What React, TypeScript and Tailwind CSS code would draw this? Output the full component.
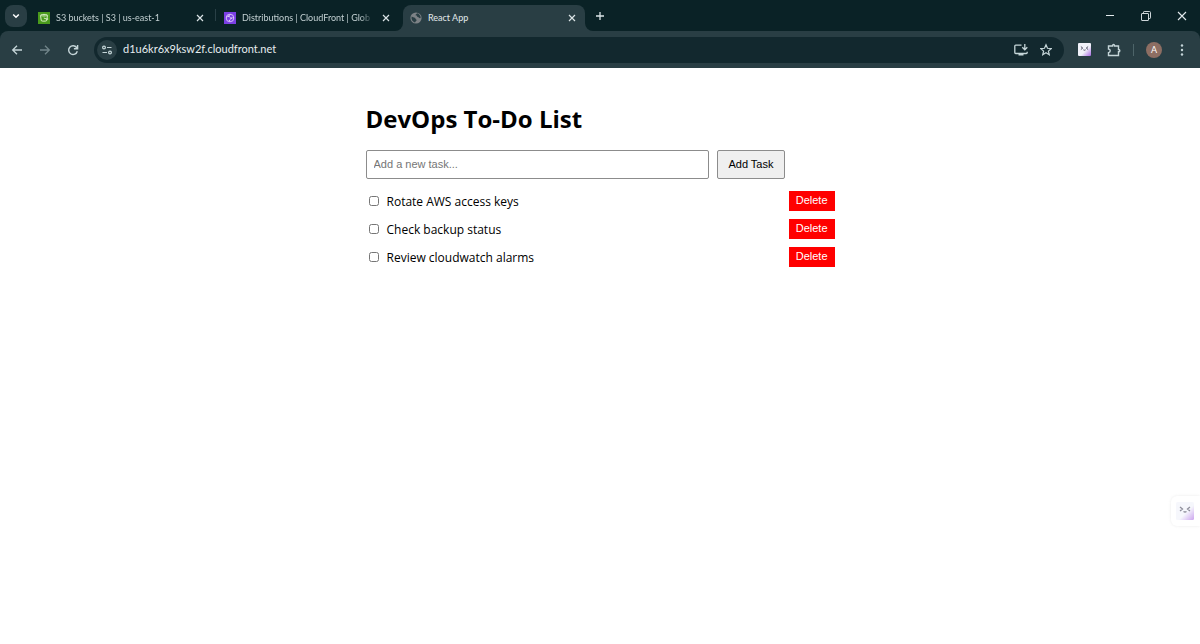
import React, { useState } from 'react';

interface Task {
  id: number;
  text: string;
  completed: boolean;
}

interface IconProps {
  className?: string;
}

const initialTasks: Task[] = [
  { id: 1, text: 'Rotate AWS access keys', completed: false },
  { id: 2, text: 'Check backup status', completed: false },
  { id: 3, text: 'Review cloudwatch alarms', completed: false }
];

const CloseIcon: React.FC<IconProps> = ({ className }) => (
  <svg className={className} viewBox="0 0 10 10" fill="none" stroke="currentColor" strokeWidth="1.2">
    <path d="M2 2l6 6M8 2L2 8" />
  </svg>
);

const BucketIcon: React.FC = () => (
  <svg className="h-3 w-3 shrink-0" viewBox="0 0 12 12" fill="none">
    <rect width="12" height="12" fill="#4a9a1c" />
    <path d="M2.5 3.5l.8 5.2c.1.6 5.2.6 5.3 0l.9-5.2M2.5 3.2c0-1 7-1 7 0s-7 1-7 0zM5.800 6l3.400 1.300c1 .3.800-.5.200-1" stroke="#e6f5d8" strokeWidth=".9" />
  </svg>
);

const CloudFrontIcon: React.FC = () => (
  <svg className="h-3 w-3 shrink-0" viewBox="0 0 12 12" fill="none">
    <rect width="12" height="12" fill="#7b3fe4" />
    <circle cx="6" cy="6" r="3.8" stroke="#e9defc" strokeWidth=".8" />
    <path d="M2.3 5l2.5-.8L7 6.2 5.6 8.8M7 6.2l2.8-.7M4.8 4.2L6.6 2.2" stroke="#e9defc" strokeWidth=".6" />
    <circle cx="4.8" cy="4.3" r=".7" fill="#e9defc" />
    <circle cx="7.2" cy="6.3" r=".7" fill="#e9defc" />
    <circle cx="5.4" cy="8.3" r=".6" fill="#e9defc" />
  </svg>
);

const GlobeIcon: React.FC = () => (
  <svg className="h-3 w-3 shrink-0" viewBox="0 0 12 12">
    <circle cx="6" cy="6" r="5.6" fill="#7d8286" />
    <path d="M1.6 4.6c1.2.5 2.2 1 3.2 1.2.8.2.4 1.4 1.3 1.6 1 .3.4 1.3-.1 1.7-.6.5-.5 1.3-1.2 1.4C2.4 9.7 1 7.6 1.6 4.6zM7 1.3c-.2.9-1.5.9-1.4 1.8.1.8 1.3.4 1.4 1.2.2.9 1.2.6 1.8 1.3.6.7 1.2.6 1.9.5C10.7 3.7 9.2 1.7 7 1.3z" fill="#293e44" />
  </svg>
);

const GhostFace: React.FC<IconProps> = ({ className }) => (
  <svg className={className} viewBox="0 0 18 18" fill="none">
    <defs>
      <linearGradient id="face" x1="4" y1="4" x2="18" y2="18" gradientUnits="userSpaceOnUse">
        <stop offset=".45" stopColor="#f1f2fa" />
        <stop offset="1" stopColor="#a968e4" />
      </linearGradient>
    </defs>
    <rect width="18" height="18" rx="1.5" fill="url(#face)" />
    <path d="M4 5l2.5 2L4 9M14 5l-2.5 2L14 9M7.5 9.5q1.5 1 3 0" stroke="#44445a" strokeWidth="1.3" />
  </svg>
);

interface TabProps {
  title: string;
  icon: React.ReactNode;
  active?: boolean;
}

const Tab: React.FC<TabProps> = ({ title, icon, active = false }) => (
  <div
    className={
      active
        ? 'relative flex w-[182px] min-w-0 items-center rounded-t-lg bg-[#293e44] pr-2 pl-[7px]'
        : 'relative flex w-[185px] min-w-0 items-center pr-2.5 pl-2'
    }
  >
    {active && (
      <>
        <span className="absolute bottom-0 -left-2 h-2 w-2 rounded-br-lg shadow-[4px_4px_0_4px_#293e44]" />
        <span className="absolute -right-2 bottom-0 h-2 w-2 rounded-bl-lg shadow-[-4px_4px_0_4px_#293e44]" />
      </>
    )}
    <button className="relative flex min-w-0 flex-1 items-center gap-1.5 text-left">
      {icon}
      <span className={active ? 'flex-1 overflow-hidden whitespace-nowrap text-[#e3eaec]' : 'flex-1 overflow-hidden mask-r-from-90% whitespace-nowrap text-[#c3d0d2]'}>
        {title}
      </span>
    </button>
    <button aria-label={`Close ${title}`} className="relative ml-2 shrink-0 text-[#dbe4e6]">
      <CloseIcon className="h-2.5 w-2.5" />
    </button>
  </div>
);

const TabStrip: React.FC = () => (
  <div className="flex h-[31px] pt-[5px] pl-[5px] text-[9px]">
    <button aria-label="Search tabs" className="mr-[3px] flex h-[22px] w-[22px] shrink-0 items-center justify-center rounded-lg bg-[#293e44] text-white">
      <svg className="h-2.5 w-2.5" viewBox="0 0 10 10" fill="none" stroke="currentColor" strokeWidth="1.5">
        <path d="M2.2 3.5L5 6.3l2.8-2.8" />
      </svg>
    </button>
    <Tab title="S3 buckets | S3 | us-east-1" icon={<BucketIcon />} />
    <span className="mt-1 h-3 w-px shrink-0 bg-[#294046]" />
    <Tab title="Distributions | CloudFront | Glob" icon={<CloudFrontIcon />} />
    <span className="w-[2px] shrink-0" />
    <Tab title="React App" icon={<GlobeIcon />} active />
    <button aria-label="New tab" className="mb-1 ml-[9px] shrink-0 text-[#dbe4e6]">
      <svg className="h-3 w-3" viewBox="0 0 12 12" fill="none" stroke="currentColor" strokeWidth="1.3">
        <path d="M6 2v8M2 6h8" />
      </svg>
    </button>
    <div className="mb-1 ml-auto flex items-center gap-6 pr-3 text-[#e3eaec]">
      <button aria-label="Minimize">
        <svg className="h-3 w-3" viewBox="0 0 12 12" stroke="currentColor"><path d="M2 5.5h8" /></svg>
      </button>
      <button aria-label="Restore">
        <svg className="h-3 w-3" viewBox="0 0 12 12" fill="none" stroke="currentColor" strokeWidth=".9">
          <rect x="1.5" y="3.5" width="7" height="7" rx=".5" />
          <path d="M3.5 3.5V2.2c0-.4.3-.7.7-.7h5.300c.6 0 1 .4 1 1v5.300c0 .4-.3.7-.7.7H8.500" />
        </svg>
      </button>
      <button aria-label="Close window">
        <svg className="h-3 w-3" viewBox="0 0 12 12" stroke="currentColor" strokeWidth="1.1"><path d="M2 2l8 8M10 2l-8 8" /></svg>
      </button>
    </div>
  </div>
);

const Toolbar: React.FC = () => (
  <div className="relative flex h-[37px] items-center rounded-t-lg bg-[#293e44] pl-2.5 text-[#c5d5d8]">
    <button aria-label="Back">
      <svg className="h-3.5 w-3.5" viewBox="0 0 14 14" fill="none" stroke="currentColor" strokeWidth="1.3"><path d="M12 7H2.7M7 2.7L2.7 7 7 11.3" /></svg>
    </button>
    <button aria-label="Forward" className="ml-3.5 text-[#71858a]">
      <svg className="h-3.5 w-3.5" viewBox="0 0 14 14" fill="none" stroke="currentColor" strokeWidth="1.3"><path d="M2 7h9.3M7 2.7L11.3 7 7 11.3" /></svg>
    </button>
    <button aria-label="Reload" className="ml-3.5">
      <svg className="h-3.5 w-3.5" viewBox="0 0 14 14" fill="none" stroke="currentColor" strokeWidth="1.4">
        <path d="M11.3 8.3A4.4 4.4 0 1 1 10.6 4.5L11.5 5.6M11.6 2v3.700H7.9" />
      </svg>
    </button>
    <div className="ml-3.5 flex h-[26px] min-w-0 flex-1 items-center rounded-full bg-[#12282e] pr-3 pl-[3px]">
      <button aria-label="Site information" className="flex h-5 w-5 shrink-0 items-center justify-center rounded-full bg-[#293e44]">
        <svg className="h-3 w-3" viewBox="0 0 12 12" fill="none" stroke="currentColor" strokeWidth="1.2">
          <circle cx="3" cy="3.5" r="1.4" />
          <circle cx="9" cy="8.5" r="1.4" />
          <path d="M6 3.5h4.5M1.5 8.5H6" />
        </svg>
      </button>
      <input
        aria-label="Address"
        defaultValue="d1u6kr6x9ksw2f.cloudfront.net"
        className="ml-1.5 min-w-0 flex-1 bg-transparent text-[11px] text-[#e6edef] outline-none"
      />
      <button aria-label="Install app">
        <svg className="h-3.5 w-3.5" viewBox="0 0 14 14" fill="none" stroke="currentColor" strokeWidth="1.3">
          <path d="M7.5 2.2H1.7c-.5 0-.9.4-.9.9v6.5c0 .5.4.9.9.9h10.6c.5 0 .9-.4.9-.9V8.8M4.5 11.8h5M10.8 1v5.5M8.3 4.3l2.5 2.5 2.5-2.5" />
        </svg>
      </button>
      <button aria-label="Bookmark this tab" className="ml-3">
        <svg className="h-3.5 w-3" viewBox="0 0 12 14" fill="none" stroke="currentColor" strokeWidth="1.2">
          <path d="M6 1.8l1.5 3.5 3.7.3-2.8 2.5.9 3.7L6 9.8l-3.3 2 .9-3.7L.8 5.6l3.7-.3z" />
        </svg>
      </button>
    </div>
    <button aria-label="Assistant extension" className="ml-3.5">
      <GhostFace className="h-[13px] w-[13px]" />
    </button>
    <button aria-label="Extensions" className="ml-4">
      <svg className="h-3.5 w-3.5" viewBox="0 0 14 14" fill="none" stroke="currentColor" strokeWidth="1.4">
        <path d="M1.5 3h4c0-2 2-2 2 0h4v3.5c1.8 0 1.8 2.3 0 2.3v3.7h-10V9.6c2.3 0 2.3-3.5 0-3.5z" />
      </svg>
    </button>
    <span className="ml-3 h-3 w-px bg-[#4d6469]" />
    <button aria-label="Profile" className="ml-3 flex h-4 w-4 items-center justify-center rounded-full bg-[#8d6e63] text-[9px] text-white">
      A
    </button>
    <button aria-label="Menu" className="mr-3 ml-3.5">
      <svg className="h-3 w-3" viewBox="0 0 12 12" fill="currentColor">
        <circle cx="6" cy="1.5" r="1.2" />
        <circle cx="6" cy="6" r="1.2" />
        <circle cx="6" cy="10.5" r="1.2" />
      </svg>
    </button>
  </div>
);

export default function App() {
  const [tasks, setTasks] = useState<Task[]>(initialTasks);
  const [newTask, setNewTask] = useState('');

  const handleAddTask = (e: React.FormEvent) => {
    e.preventDefault();
    if (!newTask.trim()) return;
    setTasks([...tasks, { id: Date.now(), text: newTask, completed: false }]);
    setNewTask('');
  };

  const toggleTask = (id: number) => {
    setTasks(tasks.map(task => (task.id === id ? { ...task, completed: !task.completed } : task)));
  };

  const deleteTask = (id: number) => {
    setTasks(tasks.filter(task => task.id !== id));
  };

  return (
    <div className="min-h-screen bg-white font-['Open_Sans',sans-serif] text-black">
      <header className="bg-[#0a2226] font-['Lato',sans-serif]">
        <TabStrip />
        <Toolbar />
      </header>

      <main className="mx-auto max-w-[469px] pt-8">
        <h1 className="text-2xl leading-[38px] font-bold">DevOps To-Do List</h1>

        <form onSubmit={handleAddTask} className="mt-3 flex gap-2 pr-[50px] font-['Liberation_Sans',sans-serif] text-[11px]">
          <input
            type="text"
            aria-label="New task"
            value={newTask}
            onChange={(e) => setNewTask(e.target.value)}
            placeholder="Add a new task..."
            className="h-[29px] min-w-0 flex-1 rounded-xs border border-[#8c8c8c] px-[7px] pb-0.5 placeholder:text-[#757575]"
          />
          <button type="submit" className="h-[29px] rounded-xs border border-[#8c8c8c] bg-[#efefef] px-2.5">
            Add Task
          </button>
        </form>

        <ul className="mt-3 space-y-2">
          {tasks.map((task) => (
            <li key={task.id} className="flex h-5 items-center justify-between">
              <label className="flex items-center gap-2 pl-[3px]">
                <input
                  type="checkbox"
                  checked={task.completed}
                  onChange={() => toggleTask(task.id)}
                  className="h-2.5 w-2.5"
                />
                <span className={task.completed ? 'pt-0.5 text-xs line-through' : 'pt-0.5 text-xs'}>{task.text}</span>
              </label>
              <button
                onClick={() => deleteTask(task.id)}
                className="h-5 bg-[red] px-[7px] pb-0.5 font-['Liberation_Sans',sans-serif] text-[11px] text-white"
              >
                Delete
              </button>
            </li>
          ))}
        </ul>
      </main>

      {/* Floating assistant handle */}
      <button
        aria-label="Open assistant"
        className="fixed right-0 bottom-[118px] rounded-l-md bg-white py-1.5 pr-1.5 pl-[5px] opacity-60 shadow-[0_0_3px_#ddd]"
      >
        <GhostFace className="h-[18px] w-[18px]" />
      </button>
    </div>
  );
}
